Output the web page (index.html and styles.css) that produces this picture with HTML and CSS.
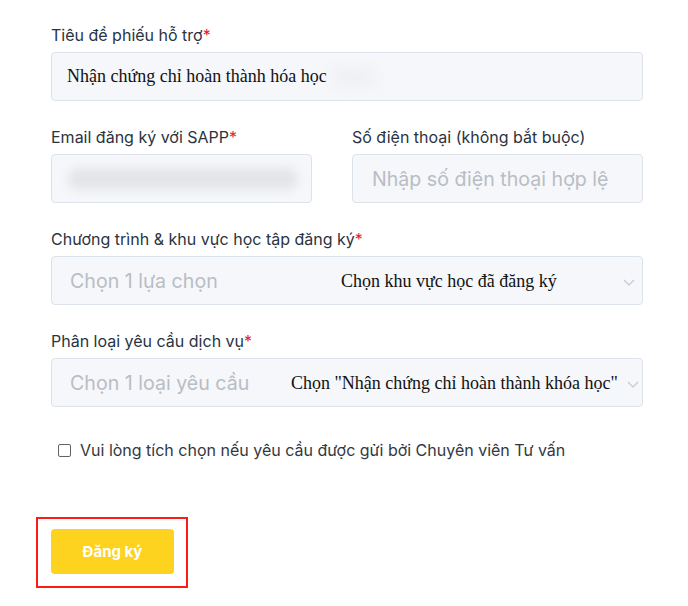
FILE: index.html
```html
<!DOCTYPE html>
<html lang="vi">
<head>
<meta charset="utf-8">
<link rel="stylesheet" href="styles.css">
</head>
<body>
<form class="form">
  <div class="field">
    <label class="label">Tiêu đề phiếu hỗ trợ<span class="req">*</span></label>
    <div class="input">
      <span class="serif-value">Nhận chứng chỉ hoàn thành hóa học</span>
      <span class="blur-light"></span>
    </div>
  </div>

  <div class="row">
    <div class="field">
      <label class="label">Email đăng ký với SAPP<span class="req">*</span></label>
      <div class="input"><span class="blur-dark"></span></div>
    </div>
    <div class="field">
      <label class="label">Số điện thoại (không bắt buộc)</label>
      <div class="input"><span class="placeholder">Nhập số điện thoại hợp lệ</span></div>
    </div>
  </div>

  <div class="field">
    <label class="label">Chương trình &amp; khu vực học tập đăng ký<span class="req">*</span></label>
    <div class="input select">
      <span class="placeholder">Chọn 1 lựa chọn</span>
      <span class="note note-1">Chọn khu vực học đã đăng ký</span>
      <svg class="chev" width="12" height="7" viewBox="0 0 12 7"><path d="M1 1l5 5 5-5" fill="none" stroke="#c3c7cf" stroke-width="1.2"/></svg>
    </div>
  </div>

  <div class="field">
    <label class="label">Phân loại yêu cầu dịch vụ<span class="req">*</span></label>
    <div class="input select">
      <span class="placeholder">Chọn 1 loại yêu cầu</span>
      <span class="note note-2">Chọn "Nhận chứng chỉ hoàn thành khóa học"</span>
      <svg class="chev chev-2" width="12" height="7" viewBox="0 0 12 7"><path d="M1 1l5 5 5-5" fill="none" stroke="#c3c7cf" stroke-width="1.2"/></svg>
    </div>
  </div>

  <label class="check">
    <span class="box"></span>
    <span>Vui lòng tích chọn nếu yêu cầu được gửi bởi Chuyên viên Tư vấn</span>
  </label>

  <div class="submit-wrap">
    <div class="highlight">
      <button type="button" class="btn">Đăng ký</button>
    </div>
  </div>
</form>
</body>
</html>
```

FILE: styles.css
```css
* { box-sizing: border-box; }
html, body { margin: 0; background: #ffffff; }
body {
  width: 688px;
  height: 606px;
  overflow: hidden;
  font-family: Inter, "Noto Sans", "Liberation Sans", sans-serif;
}
.form {
  padding: 23px 0 0 51px;
  width: 643px;
  display: flex;
  flex-direction: column;
}
.field {
  display: flex;
  flex-direction: column;
  margin-bottom: 24px;
}
.label {
  font-size: 16px;
  line-height: 24px;
  color: #2a3342;
  margin-bottom: 5px;
}
.req { color: #e5202a; }
.input {
  position: relative;
  height: 49px;
  background: #f5f7fa;
  border: 1px solid #dde3eb;
  border-radius: 4px;
  display: flex;
  align-items: center;
  padding: 0 17px;
}
.serif-value {
  font-family: "Liberation Serif", "DejaVu Serif", serif;
  font-size: 18px;
  color: #111;
  margin-left: -2px;
}
.blur-light {
  position: absolute;
  left: 282px;
  top: 15px;
  width: 40px;
  height: 18px;
  background: #eef0f3;
  filter: blur(6px);
}
.blur-dark {
  position: absolute;
  left: 16px;
  top: 13px;
  width: 230px;
  height: 22px;
  background: #e3e5e9;
  border-radius: 10px;
  filter: blur(5px);
}
.placeholder {
  font-size: 19.6px;
  color: #b9bdc4;
  margin-left: 1px;
}
.row {
  display: grid;
  grid-template-columns: 261px 291px;
  column-gap: 40px;
}
.row .field + .field .input { padding-left: 18px; }
.select { padding-right: 12px; }
.note {
  position: absolute;
  top: 50%;
  transform: translateY(-50%);
  font-family: "Liberation Serif", "DejaVu Serif", serif;
  font-size: 18px;
  color: #111;
  white-space: nowrap;
}
.note-1 { left: 289px; }
.note-2 { left: 239px; }
.chev {
  position: absolute;
  right: 7px;
  top: 22px;
}
.chev-2 { right: 3px; }
.check {
  display: flex;
  align-items: center;
  gap: 9px;
  margin: 7px 0 0 7px;
  font-size: 16px;
  color: #333842;
  line-height: 24px;
}
.box {
  width: 13px;
  height: 13px;
  border: 1px solid #5f6368;
  border-radius: 2px;
  background: #fff;
  flex: none;
}
.submit-wrap {
  margin-top: 55px;
  margin-left: -15px;
}
.highlight {
  display: inline-block;
  border: 2px solid #ff1a1a;
  padding: 10px 12px 12px 13px;
}
.btn {
  display: block;
  width: 123px;
  height: 45px;
  border: none;
  border-radius: 4px;
  background: #fed31f;
  color: #ffffff;
  font-family: Inter, "Liberation Sans", sans-serif;
  font-weight: 700;
  font-size: 15px;
  cursor: pointer;
}
```
